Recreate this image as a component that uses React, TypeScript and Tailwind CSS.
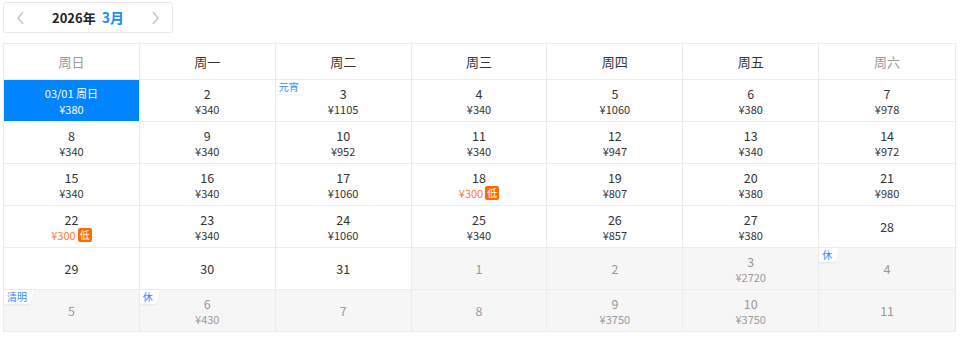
import React from "react";

type Cell = { d: string; p?: string; low?: boolean; tag?: string; other?: boolean; sel?: boolean };

const rows: Cell[][] = [
  [
    { d: "03/01 周日", p: "380", sel: true },
    { d: "2", p: "340" },
    { d: "3", p: "1105", tag: "元宵" },
    { d: "4", p: "340" },
    { d: "5", p: "1060" },
    { d: "6", p: "380" },
    { d: "7", p: "978" },
  ],
  [
    { d: "8", p: "340" },
    { d: "9", p: "340" },
    { d: "10", p: "952" },
    { d: "11", p: "340" },
    { d: "12", p: "947" },
    { d: "13", p: "340" },
    { d: "14", p: "972" },
  ],
  [
    { d: "15", p: "340" },
    { d: "16", p: "340" },
    { d: "17", p: "1060" },
    { d: "18", p: "300", low: true },
    { d: "19", p: "807" },
    { d: "20", p: "380" },
    { d: "21", p: "980" },
  ],
  [
    { d: "22", p: "300", low: true },
    { d: "23", p: "340" },
    { d: "24", p: "1060" },
    { d: "25", p: "340" },
    { d: "26", p: "857" },
    { d: "27", p: "380" },
    { d: "28" },
  ],
  [
    { d: "29" },
    { d: "30" },
    { d: "31" },
    { d: "1", other: true },
    { d: "2", other: true },
    { d: "3", p: "2720", other: true },
    { d: "4", other: true, tag: "休" },
  ],
  [
    { d: "5", other: true, tag: "清明" },
    { d: "6", p: "430", other: true, tag: "休" },
    { d: "7", other: true },
    { d: "8", other: true },
    { d: "9", p: "3750", other: true },
    { d: "10", p: "3750", other: true },
    { d: "11", other: true },
  ],
];

const heads = ["周日", "周一", "周二", "周三", "周四", "周五", "周六"];

function Tag({ t }: { t: string }) {
  return (
    <div className="absolute left-0 top-0 h-[14px] flex items-center">
      <div className="h-[14px] bg-white pl-[3px] pr-[2px] text-[10px] leading-[14px] text-[#2f8cff] shadow-[1px_1px_2px_rgba(0,0,0,0.08)]">
        {t}
      </div>
      <svg width="6" height="14" viewBox="0 0 6 14" className="-ml-px">
        <path d="M0 0 L6 0 L3 12 Q2.5 14 0 14 Z" fill="#fff" />
      </svg>
    </div>
  );
}

function CellView({ c, last }: { c: Cell; last: boolean }) {
  const bg = c.sel ? "bg-[#0084ff]" : c.other ? "bg-[#f6f6f6]" : "bg-white";
  const numCls = c.sel
    ? "text-[11px] leading-[14px] text-white"
    : c.other
      ? "text-[12.5px] leading-[15px] text-[#999]"
      : "text-[12.5px] leading-[15px] text-[#333]";
  return (
    <div
      className={`relative h-[42px] ${bg} ${last ? "" : "border-r border-[#ececec]"} border-t border-[#ececec] flex flex-col items-center justify-center`}
    >
      {c.tag && <Tag t={c.tag} />}
      <div className={numCls}>{c.d}</div>
      {c.p && (
        <div className={`flex items-center gap-[2px] leading-[14px] ${c.sel ? "mt-[2px]" : "mt-[1px]"}`}>
          <span
            className={`text-[11px] ${c.sel ? "text-white" : c.low ? "text-[#ff7a2a]" : c.other ? "text-[#999]" : "text-[#333]"}`}
          >
            ¥{c.p}
          </span>
          {c.low && (
            <span className="inline-flex h-[14px] w-[14px] items-center justify-center rounded-[2px] bg-[#ff6a00] text-[10px] leading-none text-white">
              低
            </span>
          )}
        </div>
      )}
    </div>
  );
}

export default function App() {
  return (
    <div
      className="w-[960px] h-[344px] bg-white"
      style={{ fontFamily: '"Noto Sans CJK SC", "Noto Sans", sans-serif' }}
    >
      <div className="pt-[2px] pl-[3px]">
        <div className="w-[170px] h-[31px] border border-[#e8e8e8] rounded-[3px] flex items-center justify-between px-[12px]">
          <svg width="9" height="14" viewBox="0 0 9 14">
            <path d="M7 1 L2 7 L7 13" stroke="#c4c4c4" strokeWidth="1.4" fill="none" />
          </svg>
          <div className="flex items-baseline gap-[6px]">
            <span className="text-[13px] font-bold text-[#222]">2026年</span>
            <span className="text-[14px] font-bold text-[#1a8cff]">3月</span>
          </div>
          <svg width="9" height="14" viewBox="0 0 9 14">
            <path d="M2 1 L7 7 L2 13" stroke="#c4c4c4" strokeWidth="1.4" fill="none" />
          </svg>
        </div>
      </div>
      <div className="ml-[3px] mt-[10px] w-[953px] border-l border-r border-b border-t border-[#ececec] grid grid-cols-7">
        {heads.map((h, i) => (
          <div
            key={h}
            className={`h-[35px] flex items-center justify-center text-[13px] ${i === 0 || i === 6 ? "text-[#999]" : "text-[#333]"} ${i < 6 ? "border-r border-[#ececec]" : ""}`}
          >
            {h}
          </div>
        ))}
        {rows.flatMap((r, ri) =>
          r.map((c, ci) => <CellView key={`${ri}-${ci}`} c={c} last={ci === 6} />)
        )}
      </div>
    </div>
  );
}
